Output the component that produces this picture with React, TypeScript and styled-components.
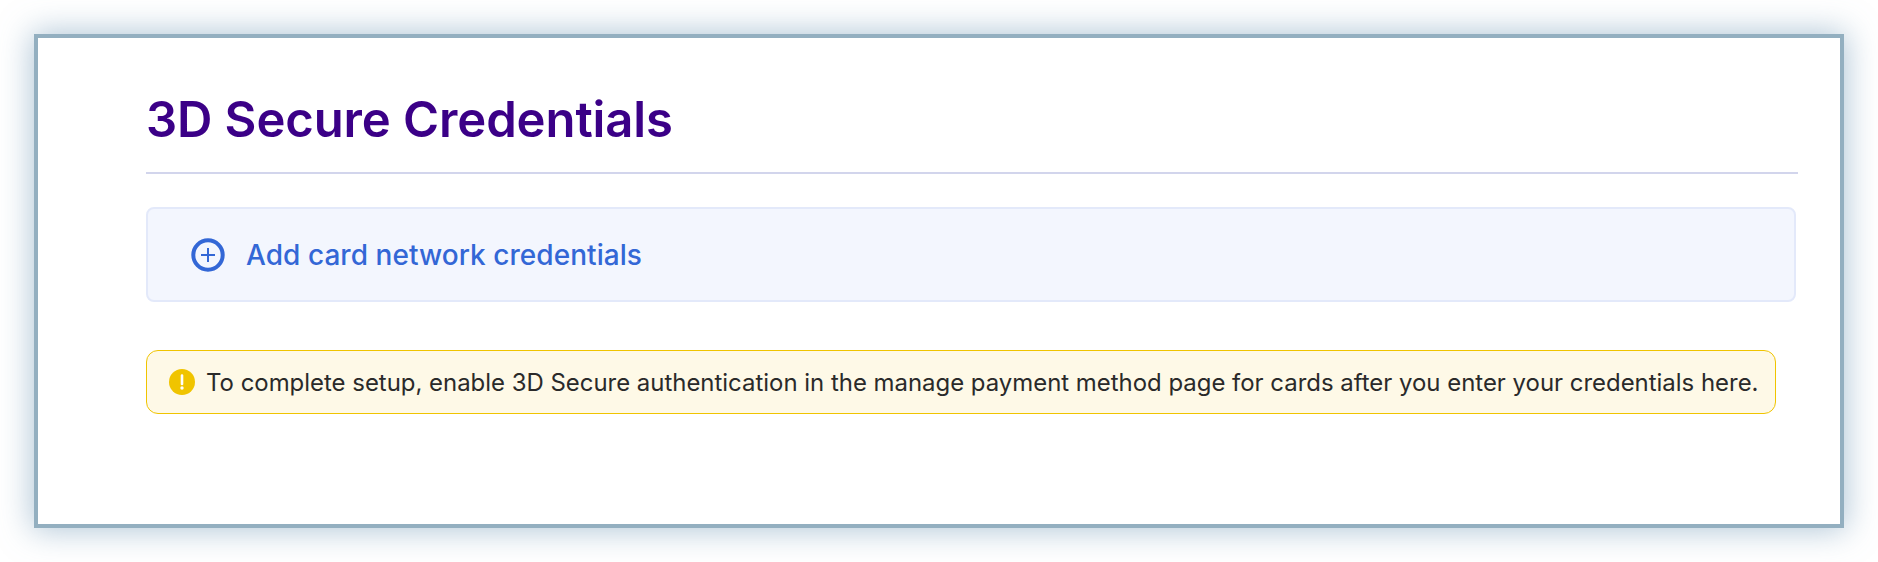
import React from 'react'
import styled, { createGlobalStyle } from 'styled-components'

const GlobalStyle = createGlobalStyle`
  html, body {
    margin: 0;
    padding: 0;
    background: #ffffff;
    overflow: hidden;
  }
  * {
    box-sizing: border-box;
  }
`

const Page = styled.div`
  width: 1878px;
  height: 562px;
  padding: 34px;
  font-family: Inter, "Liberation Sans", sans-serif;
`

const Frame = styled.main`
  width: 1810px;
  height: 494px;
  background: #ffffff;
  border: 4px solid #93afc0;
  box-shadow: 0 0 30px 2px rgba(110, 150, 180, 0.55);
  padding: 52px 42px 0 108px;
`

const Title = styled.h1`
  margin: 0;
  height: 84px;
  padding-top: 2px;
  font-size: 49px;
  line-height: 56px;
  font-weight: 600;
  letter-spacing: -0.1px;
  color: #3b0087;
  border-bottom: 2px solid #d2d5ec;
`

const AddCard = styled.button`
  display: flex;
  align-items: center;
  gap: 21px;
  width: 1650px;
  height: 95px;
  margin-top: 33px;
  padding: 0 0 0 43px;
  background: #f3f6fe;
  border: 2px solid #e3e9fa;
  border-radius: 8px;
  font-family: inherit;
  font-size: 28px;
  font-weight: 500;
  letter-spacing: 0.05px;
  color: #3367d6;
`

const Notice = styled.div`
  display: flex;
  align-items: center;
  gap: 11px;
  width: 1630px;
  height: 64px;
  margin-top: 48px;
  padding: 0 0 0 22px;
  background: #fef9e7;
  border: 1px solid #f0c400;
  border-radius: 12px;
  font-size: 23.93px;
  color: #2a2a2a;
`

const App = () => {
  return (
    <Page>
      <GlobalStyle />
      <Frame>
        <Title>3D Secure Credentials</Title>
        <AddCard type="button">
          <svg width="34" height="34" viewBox="0 0 34 34" fill="none">
            <circle cx="17" cy="17" r="14.7" stroke="#3367d6" strokeWidth="4" />
            <path d="M17 10v14M10 17h14" stroke="#3367d6" strokeWidth="2" />
          </svg>
          Add card network credentials
        </AddCard>
        <Notice>
          <svg width="26" height="26" viewBox="0 0 26 26">
            <circle cx="13" cy="13" r="13" fill="#f0c400" />
            <path d="M13 6.5v8.5" stroke="#ffffff" strokeWidth="2.6" strokeLinecap="round" />
            <circle cx="13" cy="19" r="1.7" fill="#ffffff" />
          </svg>
          To complete setup, enable 3D Secure authentication in the manage payment method page for cards after you enter your credentials here.
        </Notice>
      </Frame>
    </Page>
  )
}

export default App
